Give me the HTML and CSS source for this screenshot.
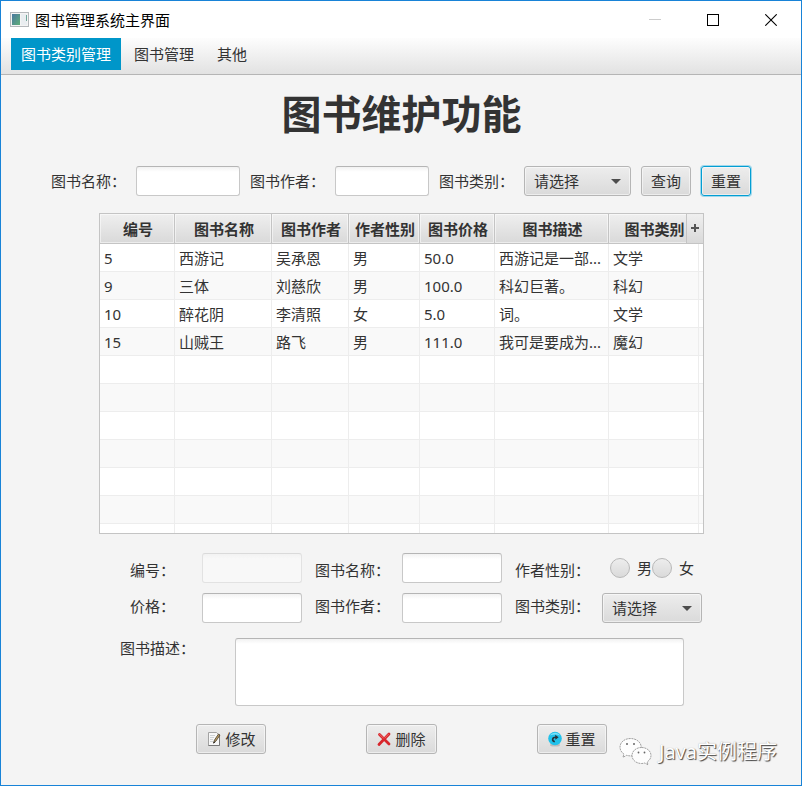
FILE: index.html
```html
<!DOCTYPE html>
<html lang="zh-CN">
<head>
    <meta charset="UTF-8">
    <meta name="viewport" content="width=device-width, initial-scale=1.0">
    <title>图书管理系统主界面</title>
    <link rel="stylesheet" href="styles.css">
</head>
<body>
    <div class="window">
        <header class="titlebar">
            <svg class="app-icon" width="19" height="16" viewBox="0 0 19 16">
                <defs>
                    <linearGradient id="appFill" x1="0" y1="0" x2="1" y2="1">
                        <stop offset="0" stop-color="#4a78a0"/>
                        <stop offset="1" stop-color="#5fae78"/>
                    </linearGradient>
                </defs>
                <rect x="0.5" y="0.5" width="18" height="14" fill="#f4f4f4" stroke="#b4b8bb"/>
                <rect x="2" y="2" width="8" height="11" fill="url(#appFill)"/>
                <rect x="11" y="2" width="6" height="11" fill="#e9edf0"/>
                <path d="M16 3h1v6h-1z" fill="#6fa79a"/>
            </svg>
            <span class="title">图书管理系统主界面</span>
            <div class="window-controls">
                <button type="button" aria-label="最小化" disabled>
                    <svg width="12" height="12" viewBox="0 0 12 12"><path d="M0 5.5h12" stroke="#ccc"/></svg>
                </button>
                <button type="button" aria-label="最大化">
                    <svg width="12" height="12" viewBox="0 0 12 12"><rect x="0.5" y="0.5" width="11" height="11" fill="none" stroke="#000"/></svg>
                </button>
                <button type="button" aria-label="关闭">
                    <svg width="12" height="12" viewBox="0 0 12 12"><path d="M0.3 0.3l11.4 11.4M11.7 0.3L0.3 11.7" stroke="#000" stroke-width="1.1"/></svg>
                </button>
            </div>
        </header>
        <nav class="menubar">
            <button type="button" class="active">图书类别管理</button>
            <button type="button">图书管理</button>
            <button type="button">其他</button>
        </nav>
        <main>
            <h1>图书维护功能</h1>
            <form class="search">
                <label for="searchName">图书名称：</label>
                <input type="text" class="field name" id="searchName">
                <label for="searchAuthor">图书作者：</label>
                <input type="text" class="field author" id="searchAuthor">
                <label for="searchType">图书类别：</label>
                <div class="combo type">
                    <select id="searchType">
                        <option>请选择</option>
                        <option>文学</option>
                        <option>科幻</option>
                        <option>魔幻</option>
                    </select>
                </div>
                <button type="button" class="btn">查询</button>
                <button type="reset" class="btn focused">重置</button>
            </form>
            <div class="table-view">
                <table>
                    <colgroup>
                        <col class="c-id">
                        <col class="c-name">
                        <col class="c-author">
                        <col class="c-sex">
                        <col class="c-price">
                        <col class="c-desc">
                        <col class="c-type">
                        <col>
                    </colgroup>
                    <thead>
                        <tr>
                            <th>编号</th>
                            <th>图书名称</th>
                            <th>图书作者</th>
                            <th>作者性别</th>
                            <th>图书价格</th>
                            <th>图书描述</th>
                            <th>图书类别</th>
                            <th></th>
                        </tr>
                    </thead>
                    <tbody>
                        <tr><td>5</td><td>西游记</td><td>吴承恩</td><td>男</td><td>50.0</td><td>西游记是一部...</td><td>文学</td><td></td></tr>
                        <tr><td>9</td><td>三体</td><td>刘慈欣</td><td>男</td><td>100.0</td><td>科幻巨著。</td><td>科幻</td><td></td></tr>
                        <tr><td>10</td><td>醉花阴</td><td>李清照</td><td>女</td><td>5.0</td><td>词。</td><td>文学</td><td></td></tr>
                        <tr><td>15</td><td>山贼王</td><td>路飞</td><td>男</td><td>111.0</td><td>我可是要成为...</td><td>魔幻</td><td></td></tr>
                        <tr><td></td><td></td><td></td><td></td><td></td><td></td><td></td><td></td></tr>
                        <tr><td></td><td></td><td></td><td></td><td></td><td></td><td></td><td></td></tr>
                        <tr><td></td><td></td><td></td><td></td><td></td><td></td><td></td><td></td></tr>
                        <tr><td></td><td></td><td></td><td></td><td></td><td></td><td></td><td></td></tr>
                        <tr><td></td><td></td><td></td><td></td><td></td><td></td><td></td><td></td></tr>
                        <tr><td></td><td></td><td></td><td></td><td></td><td></td><td></td><td></td></tr>
                        <tr><td></td><td></td><td></td><td></td><td></td><td></td><td></td><td></td></tr>
                    </tbody>
                </table>
                <button type="button" class="column-menu" aria-label="显示列">
                    <svg width="8" height="10" viewBox="0 0 8 10"><path d="M4 0v8M0 4h8" stroke="#555" stroke-width="2"/></svg>
                </button>
            </div>
            <form class="detail">
                <div class="detail-grid">
                    <label class="low" for="bookId">编号：</label>
                    <input type="text" class="field" id="bookId" disabled>
                    <label class="low next" for="bookName">图书名称：</label>
                    <input type="text" class="field" id="bookName">
                    <span class="low next">作者性别：</span>
                    <div class="radios">
                        <input type="radio" name="sex" id="male"><label for="male">男</label>
                        <input type="radio" name="sex" id="female"><label for="female">女</label>
                    </div>
                    <label for="price">价格：</label>
                    <input type="text" class="field" id="price">
                    <label class="next" for="author">图书作者：</label>
                    <input type="text" class="field" id="author">
                    <label class="next" for="bookType">图书类别：</label>
                    <div class="combo">
                        <select id="bookType">
                            <option>请选择</option>
                            <option>文学</option>
                            <option>科幻</option>
                            <option>魔幻</option>
                        </select>
                    </div>
                </div>
                <div class="desc-row">
                    <label for="desc">图书描述：</label>
                    <textarea class="field" id="desc"></textarea>
                </div>
                <div class="actions">
                    <button type="button" class="btn">
                        <svg width="14" height="16" viewBox="0 0 14 16">
                            <path d="M1.5 1.5h8l3 3v10h-11z" fill="#f7f7f7" stroke="#a3a3a3"/>
                            <path d="M12.5 4v10.5h-11" fill="none" stroke="#777"/>
                            <path d="M3 4.5h5M3 6.5h4M3 8.5h3M3 10.5h3" stroke="#cfd3d6"/>
                            <path d="M6.5 12l1-3 4-6 1.5 1-4 6z" fill="#b89b62" stroke="#4a4030" stroke-width="0.8"/>
                            <path d="M6.2 12.6l.8-2 1.3.9z" fill="#222"/>
                        </svg>
                        修改
                    </button>
                    <button type="button" class="btn">
                        <svg width="14" height="16" viewBox="0 0 14 16">
                            <path d="M2.5 3.5l9.500 9.500M12 3l-10 10.500" fill="none" stroke="#d8262c" stroke-width="2.8" stroke-linecap="round"/>
                            <path d="M2.5 3.2l4 4M11.5 3.2l-3.5 3.6" stroke="#ee6a68" stroke-width="1" stroke-linecap="round"/>
                        </svg>
                        删除
                    </button>
                    <button type="reset" class="btn">
                        <svg width="14" height="16" viewBox="0 0 14 16">
                            <ellipse cx="7" cy="14" rx="5" ry="1.5" fill="#bbb"/>
                            <circle cx="7" cy="7.5" r="6.8" fill="#20c1ea"/>
                            <path d="M2 4.5a6 6 0 0 1 10 0q-5-2-10 0z" fill="#7be0f7"/>
                            <path d="M6.8 10.8C3.6 9.6 4 6.3 8 6.3" fill="none" stroke="#26323a" stroke-width="1.6"/>
                            <path d="M7.2 3.8l3.4 2.5-3.2 2.4z" fill="#26323a"/>
                        </svg>
                        重置
                    </button>
                </div>
            </form>
        </main>
        <div class="watermark">
            <svg width="34" height="30" viewBox="0 0 34 30">
                <g fill="#fdfdfd" stroke="#8a8a8a" stroke-width="0.8" stroke-dasharray="2 0.7">
                    <path d="M11.5 1.5C5.5 1.5 1 5.3 1 10.2c0 2.8 1.5 5.2 3.9 6.8L4 20.3l3.7-2c1.2.4 2.5.6 3.8.6 6 0 10.700-3.900 10.700-8.700S17.500 1.500 11.500 1.500z"/>
                    <path d="M22.5 10.5c-5.3 0-9.500 3.500-9.500 8s4.200 8 9.500 8c1.200 0 2.300-.2 3.300-.5l3.200 1.800-.8-2.900c2.300-1.500 3.800-3.800 3.800-6.400 0-4.500-4.200-8-9.500-8z"/>
                </g>
                <g fill="#666">
                    <circle cx="8" cy="7" r="1"/>
                    <circle cx="15" cy="7" r="1"/>
                    <circle cx="19.500" cy="15.500" r="0.900"/>
                    <circle cx="25.500" cy="15.500" r="0.900"/>
                </g>
            </svg>
            <span>Java实例程序</span>
        </div>
    </div>
</body>
</html>
```
FILE: styles.css
```css
* {
    box-sizing: border-box;
}
body {
    margin: 0;
    font-family: "Noto Sans", "Noto Sans CJK SC", sans-serif;
    font-size: 15px;
    line-height: 26px;
    color: #333;
}
button, input, select, textarea {
    font: inherit;
    color: inherit;
    margin: 0;
}
.window {
    position: relative;
    min-height: 100vh;
    background: #f4f4f4;
    border: 1px solid #1883d7;
}

/* title bar and menu */
.titlebar {
    display: flex;
    align-items: center;
    height: 37px;
    padding: 0 1px 0 9px;
    background: #fff;
    color: #000;
}
.title {
    flex: 1;
    margin-left: 6px;
}
.window-controls {
    display: flex;
}
.window-controls button {
    display: flex;
    align-items: center;
    justify-content: center;
    width: 58px;
    height: 36px;
    padding: 0;
    border: none;
    background: none;
}
.menubar {
    display: flex;
    gap: 3px;
    padding: 0 10px 4px;
    background: linear-gradient(#fdfdfd, #e2e2e2);
    border-bottom: 1px solid #b5b5b5;
}
.menubar button {
    height: 32px;
    padding: 0 10px;
    border: none;
    background: none;
}
.menubar .active {
    background: #0096c9;
    color: #fff;
}

main {
    padding: 0 97px 0 98px;
}
h1 {
    margin: 9px 0 22px;
    font-size: 40px;
    line-height: 60px;
    text-align: center;
}

/* controls */
.field {
    min-width: 0;
    height: 30px;
    padding: 0 8px;
    border: 1px solid #c8c8c8;
    border-top-color: #b5b5b5;
    border-radius: 3px;
    background: linear-gradient(#f2f2f2, #fff 5px);
    outline: none;
}
.field:disabled {
    opacity: 0.4;
}
.btn, .combo select {
    height: 30px;
    border: 1px solid #b5b5b5;
    border-radius: 3px;
    background: linear-gradient(#ededed, #dadada);
    box-shadow: inset 0 0 0 1px rgba(255, 255, 255, 0.5);
    line-height: 26px;
}
.btn {
    display: flex;
    align-items: center;
    gap: 4px;
    padding: 0 9px;
    white-space: nowrap;
}
.btn.focused {
    border-color: #039ed3;
    box-shadow: 0 0 0 1px #9fd8ec, inset 0 0 0 1px rgba(255, 255, 255, 0.5);
}
.combo {
    position: relative;
}
.combo select {
    width: 100%;
    padding: 0 9px;
    appearance: none;
}
.combo::after {
    content: "";
    position: absolute;
    top: 13px;
    right: 10px;
    border: 5px solid transparent;
    border-top-color: #4d4d4d;
    border-bottom: none;
    pointer-events: none;
}

.search {
    display: flex;
    justify-content: center;
    align-items: center;
    gap: 10px;
    margin: 0 -49px 17px -50px;
}
.search label {
    white-space: nowrap;
}
.search .name {
    width: 104px;
}
.search .author {
    width: 94px;
}
.search .type {
    width: 107px;
}

/* book table */
.table-view {
    position: relative;
    height: 321px;
    overflow: hidden;
    border: 1px solid #c4c4c4;
    background: #fff;
}
table {
    width: 100%;
    table-layout: fixed;
    border-collapse: separate;
    border-spacing: 0;
}
.c-id, .c-price {
    width: 75px;
}
.c-name {
    width: 97px;
}
.c-author {
    width: 77px;
}
.c-sex {
    width: 71px;
}
.c-desc {
    width: 114px;
}
.c-type {
    width: 90px;
}
th, td {
    overflow: hidden;
    white-space: nowrap;
}
th {
    height: 30px;
    padding: 0 0 0 2px;
    border-right: 1px solid #c4c4c4;
    border-bottom: 1px solid #c4c4c4;
    background: linear-gradient(#efefef, #d9d9d9);
    box-shadow: inset 0 0 0 1px rgba(255, 255, 255, 0.5);
}
td {
    height: 28px;
    padding: 0 4px;
    border-right: 1px solid #ededed;
    border-bottom: 1px solid #ededed;
}
th:last-child, td:last-child {
    padding: 0;
    border-right: none;
}
tbody tr:nth-child(even) {
    background: #f9f9f9;
}
.column-menu {
    position: absolute;
    top: 0;
    right: 0;
    display: flex;
    align-items: center;
    justify-content: center;
    width: 17px;
    height: 30px;
    padding: 0;
    border: none;
    border-left: 1px solid #c4c4c4;
    border-bottom: 1px solid #c4c4c4;
    background: linear-gradient(#efefef, #d9d9d9);
}

/* edit form */
.detail-grid {
    display: grid;
    grid-template-columns: 72px 1fr 100px 1fr 100px 1fr;
    row-gap: 10px;
    margin: 19px 2px 0 31px;
}
.detail-grid .next {
    padding-left: 13px;
    white-space: nowrap;
}
.detail-grid .low {
    align-self: end;
}
.radios {
    display: flex;
    align-items: center;
    padding-left: 8px;
}
.radios input {
    flex: none;
    width: 20px;
    height: 20px;
    appearance: none;
    border: 1px solid #b8b8b8;
    border-radius: 50%;
    background: linear-gradient(#ededed, #dadada);
}
.radios label {
    padding-left: 7px;
}
.desc-row {
    display: flex;
    align-items: flex-start;
    margin: 15px 20px 0 21px;
}
.desc-row label {
    width: 115px;
    line-height: 20px;
}
.desc-row textarea {
    flex: 1;
    height: 68px;
    resize: none;
}
.actions {
    display: flex;
    justify-content: center;
    gap: 100px;
    margin: 18px 0 30px;
}
.actions .btn {
    padding: 0 10px;
}

.watermark {
    position: absolute;
    right: 24px;
    bottom: 18px;
    display: flex;
    align-items: center;
    gap: 6px;
    font-size: 20px;
    line-height: 30px;
    color: #fff;
    text-shadow: 1px 1px 1px #444, 0 0 1px #aaa;
}
```
